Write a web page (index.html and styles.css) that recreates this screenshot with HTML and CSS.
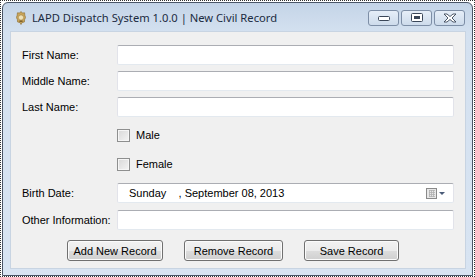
FILE: index.html
```html
<!DOCTYPE html>
<html lang="en">
<head>
  <meta charset="UTF-8" />
  <title>LAPD Dispatch System 1.0.0 | New Civil Record</title>
  <link rel="stylesheet" href="styles.css">
</head>
<body>
  <div class="screen">
    <div class="window">
      <div class="titlebar">
        <svg class="app-icon" width="10" height="14" viewBox="0 0 10 14">
          <path d="M5 0.5 L6.3 2 L8.6 1.8 L8.8 4.2 L9.6 6.5 L8.6 8.6 L8.4 11 L6 11.6 L5 13.5 L4 11.6 L1.6 11 L1.4 8.6 L0.4 6.5 L1.2 4.2 L1.4 1.8 L3.7 2 Z" fill="#c9a55a" stroke="#8a6a2c" stroke-width="0.6"/>
          <circle cx="5" cy="6.5" r="2.6" fill="#f0e2b8" stroke="#9a7a3a" stroke-width="0.5"/>
          <rect x="3.4" y="9.6" width="3.2" height="1.2" fill="#6b5426"/>
        </svg>
        <span class="title">LAPD Dispatch System 1.0.0 | New Civil Record</span>
        <div class="caption">
          <div class="cap-btn">
            <svg width="12" height="6" viewBox="0 0 12 6"><rect x="0.5" y="1.5" width="11" height="4" rx="1" fill="#fff" stroke="#3a4658"/></svg>
          </div>
          <div class="cap-btn">
            <svg width="12" height="9" viewBox="0 0 12 9"><rect x="0.5" y="0.5" width="11" height="8" rx="1" fill="#fff" stroke="#3a4658"/><rect x="3" y="3" width="6" height="3" fill="#3a4658"/></svg>
          </div>
          <div class="cap-btn">
            <svg width="14" height="10" viewBox="0 0 14 10"><path d="M1 1 L4 1 L7 3.5 L10 1 L13 1 L9 5 L13 9 L10 9 L7 6.5 L4 9 L1 9 L5 5 Z" fill="#fff" stroke="#3a4658" stroke-width="0.9" stroke-linejoin="round"/></svg>
          </div>
        </div>
      </div>
      <div class="client">
        <div class="row first">
          <label class="lbl">First Name:</label>
          <div class="textbox"></div>
        </div>
        <div class="row">
          <label class="lbl">Middle Name:</label>
          <div class="textbox"></div>
        </div>
        <div class="row">
          <label class="lbl">Last Name:</label>
          <div class="textbox"></div>
        </div>
        <div class="row check-row male">
          <span class="lbl"></span>
          <span class="checkbox"></span>
          <span class="check-text">Male</span>
        </div>
        <div class="row check-row">
          <span class="lbl"></span>
          <span class="checkbox"></span>
          <span class="check-text">Female</span>
        </div>
        <div class="row date-row">
          <label class="lbl">Birth Date:</label>
          <div class="textbox datepicker">
            <span class="date-text">Sunday&nbsp;&nbsp;&nbsp;&nbsp;, September 08, 2013</span>
            <svg class="cal-icon" width="20" height="11" viewBox="0 0 20 11">
              <rect x="0.5" y="0.5" width="10" height="10" fill="#e8e8e8" stroke="#8a8a8a"/>
              <path d="M3 2.5 H9 M3 4.5 H9 M3 6.5 H9 M3 8.5 H9 M3.5 2 V9 M5.5 2 V9 M7.5 2 V9" stroke="#b0b0b0" stroke-width="0.8"/>
              <path d="M13 4 L19 4 L16 7 Z" fill="#4a5b78"/>
            </svg>
          </div>
        </div>
        <div class="row other-row">
          <label class="lbl">Other Information:</label>
          <div class="textbox"></div>
        </div>
        <div class="buttons">
          <button class="btn add">Add New Record</button>
          <button class="btn remove">Remove Record</button>
          <button class="btn save">Save Record</button>
        </div>
      </div>
    </div>
  </div>
</body>
</html>
```

FILE: styles.css
```css
body {
  margin: 0;
  background: #fff;
  font-family: "Liberation Sans", Arial, sans-serif;
  font-size: 11px;
  color: #000;
}
.screen {
  width: 475px;
  height: 277px;
  box-sizing: border-box;
  border: 1px dotted #333;
  padding: 1px 1px 0 1px;
}
.window {
  width: 471px;
  height: 274px;
  box-sizing: border-box;
  border: 1px solid #4a5566;
  border-radius: 6px 6px 0 0;
  background: linear-gradient(#c4d4e7 0, #d4e1f0 30px, #d8e4f2 100%);
  padding: 0 6px 6px 7px;
  display: flex;
  flex-direction: column;
}
.titlebar {
  height: 28px;
  display: flex;
  align-items: center;
  padding-left: 6px;
}
.app-icon { margin-top: 1px; }
.title {
  font-family: "Noto Sans", "Open Sans", sans-serif;
  font-size: 11.2px;
  color: #1b2b3f;
  margin-left: 6px;
  margin-top: 1px;
  flex: 1;
}
.caption {
  display: flex;
  gap: 2px;
  margin-right: 1px;
  margin-top: 1px;
}
.cap-btn {
  width: 31px;
  height: 16px;
  box-sizing: border-box;
  border: 1px solid #7d8ea6;
  border-radius: 3px;
  background: linear-gradient(#e6eef8, #cddbeb);
  display: flex;
  align-items: center;
  justify-content: center;
}
.client {
  flex: 1;
  background: #f0f0f0;
  border: 1px solid #c8d4e2;
  padding: 13px 0 0 11px;
}
.row {
  display: flex;
  align-items: center;
  height: 20px;
  margin-top: 6px;
}
.row.first { margin-top: 0; }
.lbl {
  width: 95px;
  flex: none;
}
.textbox {
  width: 337px;
  height: 20px;
  box-sizing: border-box;
  background: #fff;
  border: 1px solid #e2e3ea;
  border-top-color: #abadb3;
  border-bottom-color: #e3e9ef;
  border-radius: 2px;
}
.check-row { margin-top: 8px; }
.check-row + .check-row { margin-top: 9px; }
.checkbox {
  width: 13px;
  height: 13px;
  box-sizing: border-box;
  border: 1px solid #8e8f8f;
  background: linear-gradient(135deg, #d8d8d8, #f4f4f4);
  box-shadow: inset 0 0 0 1px #f6f6f6;
}
.check-text { margin-left: 6px; }
.date-row { margin-top: 9px; }
.datepicker {
  display: flex;
  align-items: center;
  justify-content: space-between;
  padding: 0 7px 0 11px;
}
.cal-icon { margin-top: 1px; }
.other-row { margin-top: 7px; }
.buttons {
  display: flex;
  gap: 21px;
  padding-left: 45px;
  margin-top: 10px;
}
.btn {
  height: 21px;
  box-sizing: border-box;
  border: 1px solid #707070;
  border-radius: 3px;
  background: linear-gradient(#f2f2f2 0, #ebebeb 50%, #dddddd 50%, #cfcfcf 100%);
  box-shadow: inset 0 0 0 1px #fbfbfb;
  font-family: "Liberation Sans", Arial, sans-serif;
  font-size: 11px;
  color: #000;
  padding: 0;
}
.add { width: 96px; }
.remove { width: 99px; }
.save { width: 95px; }
```
